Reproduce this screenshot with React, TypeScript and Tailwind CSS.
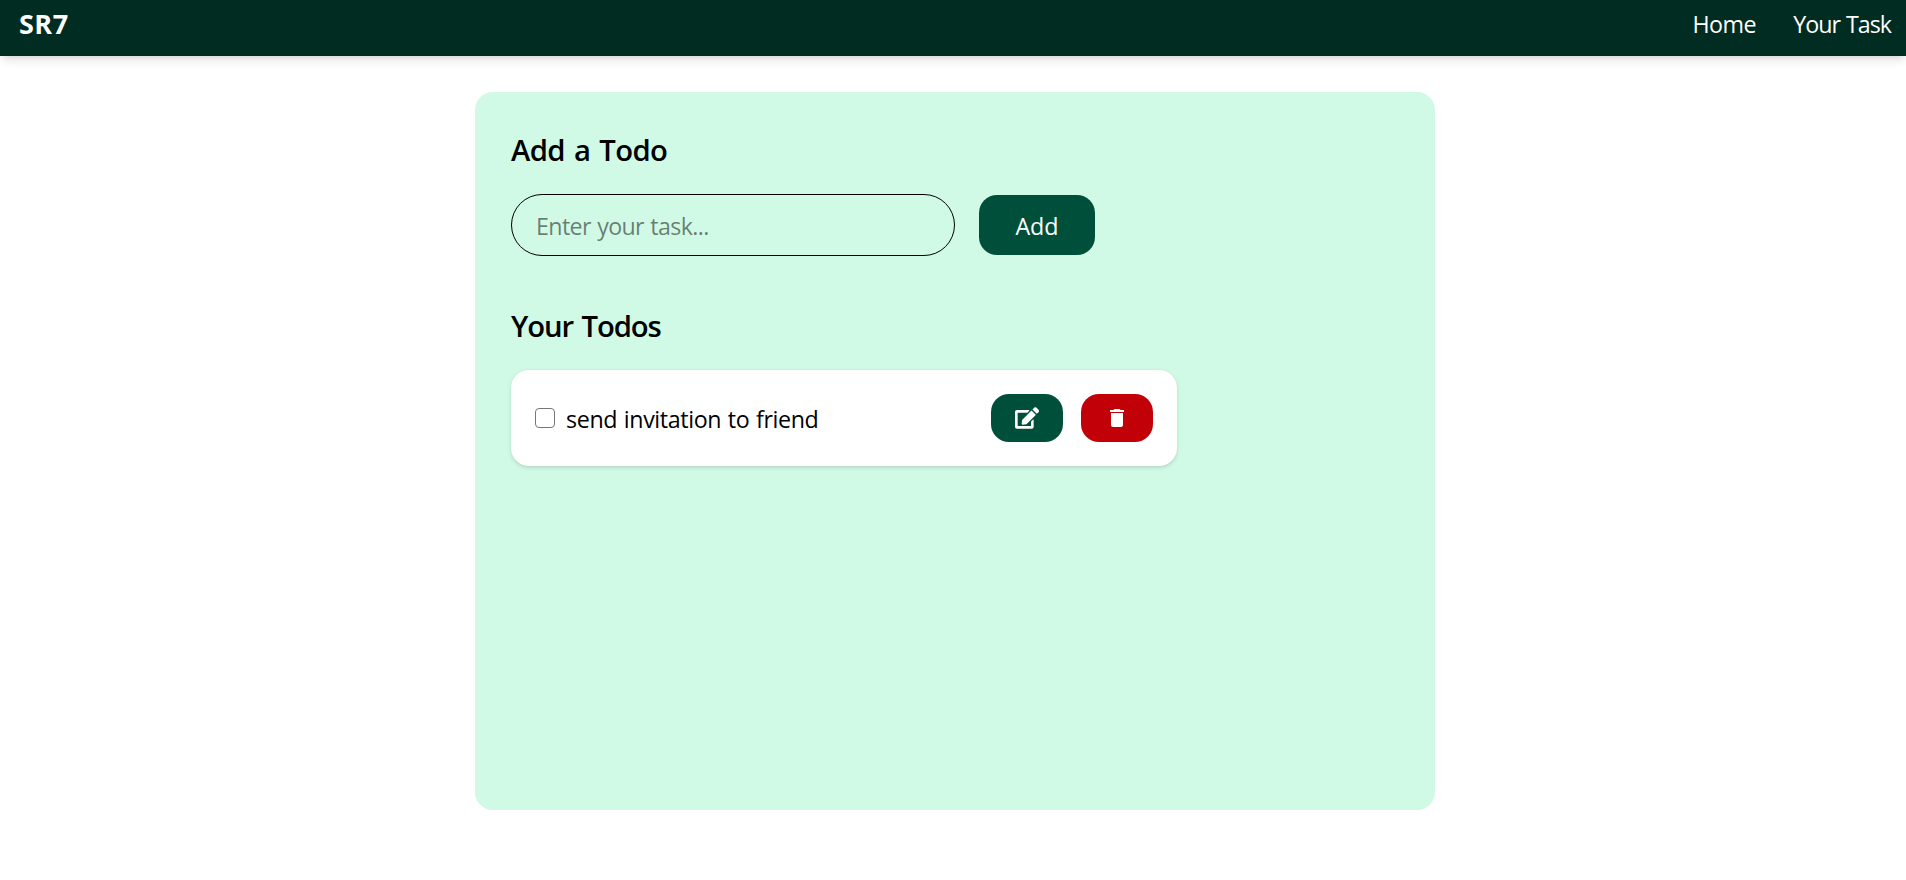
import { FaEdit } from "react-icons/fa";
import { MdDelete } from "react-icons/md";

function Navbar() {
  return (
    <nav className="flex h-14 items-start justify-between bg-emerald-950 pl-[19px] pr-[15px] pt-[6px] text-white shadow-[0_6px_9px_-1.5px_rgb(0_0_0/0.1),0_3px_6px_-3px_rgb(0_0_0/0.1)]">
      <span className="text-[27px] leading-9 font-bold tracking-[0.5px]">SR7</span>
      <ul className="flex gap-[37px] text-[23.25px] leading-9">
        <li className="tracking-[-0.5px]">Home</li>
        <li className="tracking-[-1px] [word-spacing:1px]">Your Task</li>
      </ul>
    </nav>
  );
}

function TodoItem({ text }: { text: string }) {
  return (
    <li className="flex h-24 w-[666px] items-center justify-between rounded-[18px] bg-white p-6 shadow-[0_1.5px_4.5px_rgb(0_0_0/0.1),0_1.5px_3px_-1.5px_rgb(0_0_0/0.1)]">
      <label className="flex items-center gap-[11px]">
        <input type="checkbox" className="size-5 appearance-none rounded-[4px] border border-[#767676] bg-white" />
        <span className="pt-[2px] text-[23.25px] leading-9 tracking-[-0.38px] [word-spacing:1px]">{text}</span>
      </label>
      <div className="flex gap-[18px]">
        <button aria-label="Edit" className="flex h-12 w-[72px] items-center justify-center rounded-[18px] bg-emerald-900 text-white">
          <FaEdit className="size-6" />
        </button>
        <button aria-label="Delete" className="flex h-12 w-[72px] items-center justify-center rounded-[18px] bg-red-700 text-white">
          <MdDelete className="size-6" />
        </button>
      </div>
    </li>
  );
}

export default function App() {
  return (
    <div className="h-[880px] overflow-hidden bg-white font-['Open_Sans','Noto_Sans',sans-serif] text-black">
      <Navbar />
      <main className="mx-auto mt-9 h-[718px] w-[960px] translate-x-[2px] rounded-[18px] bg-emerald-100 px-9 pt-9">
        <h2 className="text-[29.25px] leading-[45px] font-semibold tracking-[-0.6px] [word-spacing:2px]">Add a Todo</h2>
        <form className="mt-[21px] flex items-center gap-6">
          <input
            placeholder="Enter your task..."
            className="h-[62px] w-[444px] rounded-full border border-black bg-transparent px-6 pt-px text-[23.25px] tracking-[-0.65px] [word-spacing:1px] placeholder:text-black/50"
          />
          <button type="button" className="h-[60px] w-[116px] rounded-[18px] bg-emerald-900 pt-[2px] text-[23.25px] text-white">
            Add
          </button>
        </form>
        <h2 className="mt-12 text-[29.25px] leading-[45px] font-semibold tracking-[-1.1px] [word-spacing:2px]">Your Todos</h2>
        <ul className="mt-[21px]">
          <TodoItem text="send invitation to friend" />
        </ul>
      </main>
    </div>
  );
}
